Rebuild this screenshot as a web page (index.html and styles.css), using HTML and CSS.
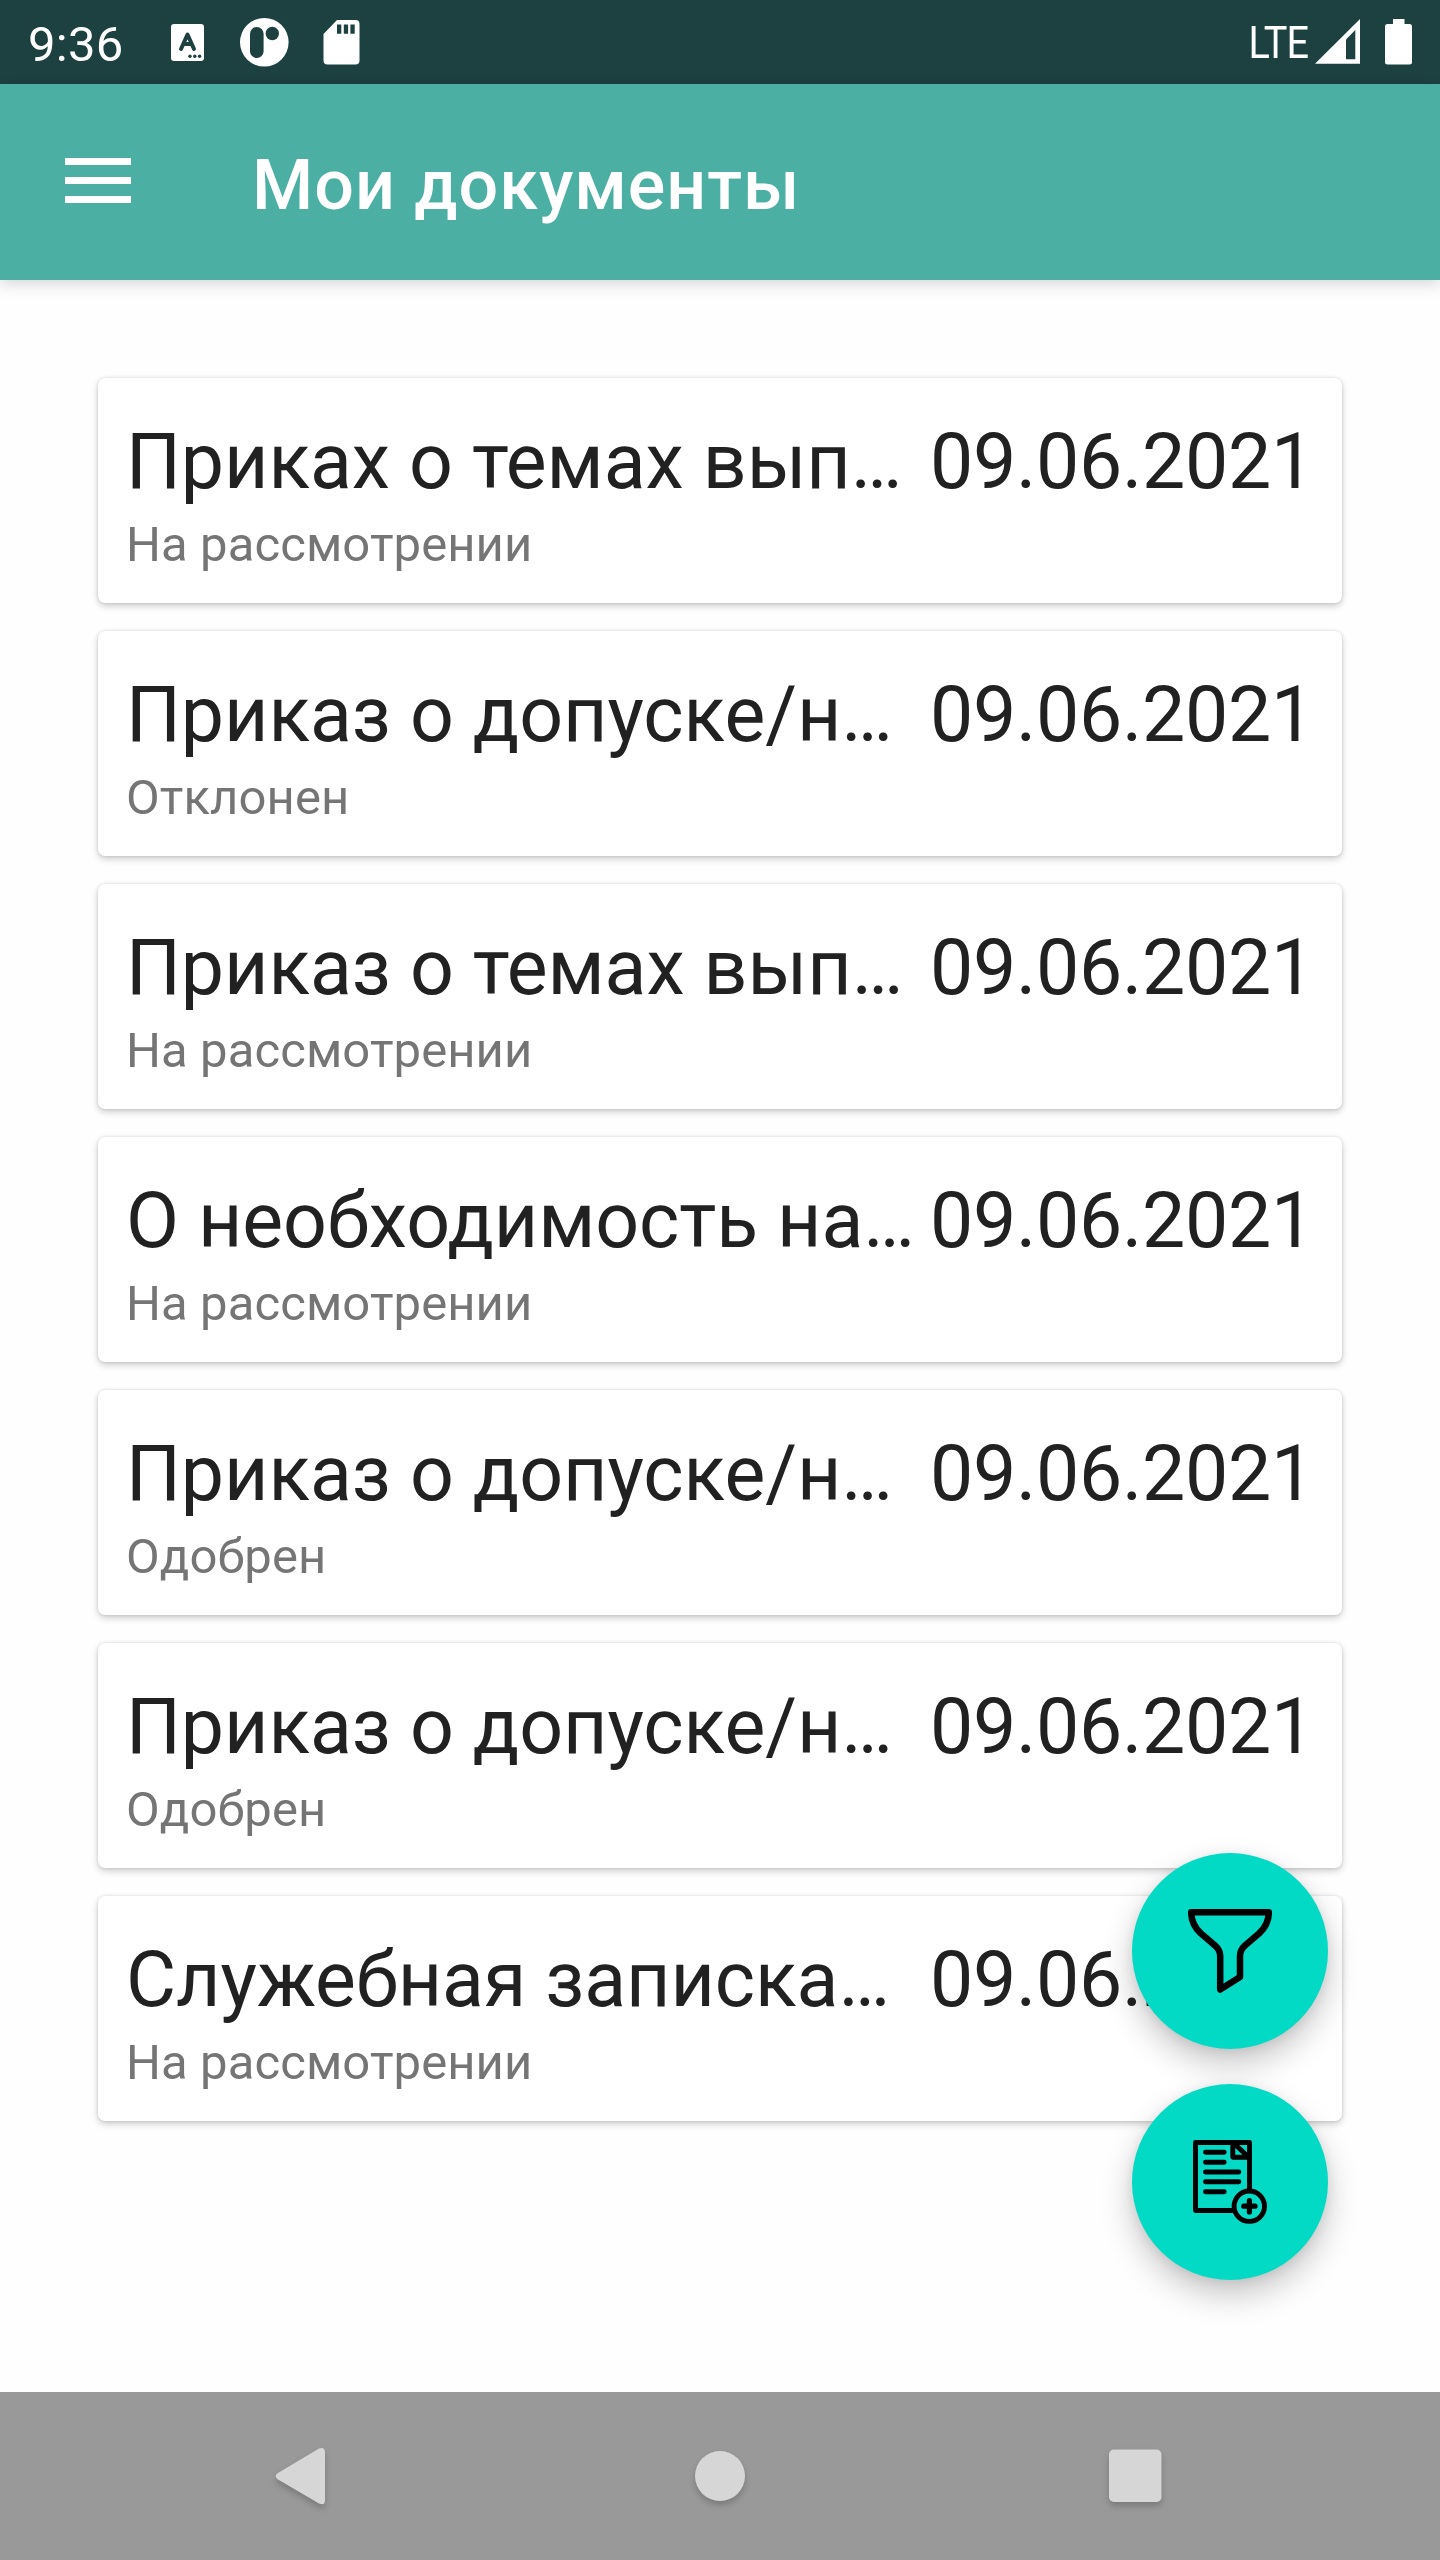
FILE: index.html
```html
<!DOCTYPE html>
<html lang="ru">
<head>
<meta charset="utf-8">
<title>Мои документы</title>
<link rel="stylesheet" href="styles.css">
</head>
<body>
<div class="screen">
  <header class="status-bar">
    <span class="clock">9:36</span>
    <svg class="notifications" width="190" height="50" viewBox="170 17 190 50">
      <rect x="171" y="24" width="33" height="37" rx="3" fill="#fff"/>
      <path d="M181 49l6.500-14.500 6.500 14.500M183.500 44h8" fill="none" stroke="#1d4040" stroke-width="4" stroke-linecap="round" stroke-linejoin="round"/>
      <g fill="#1d4040"><circle cx="190" cy="56.300" r="1.700"/><circle cx="194.800" cy="56.300" r="1.700"/><circle cx="199.600" cy="56.300" r="1.700"/></g>
      <circle cx="264.300" cy="42.300" r="24.300" fill="#fff"/>
      <rect x="250" y="27" width="13.600" height="31" rx="6.800" fill="#1d4040"/>
      <circle cx="272.300" cy="33.500" r="6.700" fill="#1d4040"/>
      <path d="M337 20h18.500q4 0 4 4v36.500q0 4-4 4h-28q-4 0-4-4V34z" fill="#fff"/>
      <path d="M337 24.500h4.300v9.300h-4.300zM343.800 24.500h4.300v9.300h-4.300zM350.400 24.500h4.300v9.300h-4.300z" fill="#1d4040"/>
    </svg>
    <span class="network">LTE</span>
    <svg class="signals" width="100" height="50" viewBox="1314 17 100 50">
      <path d="M1315 63.700 1360 19v44.700z" fill="#fff"/>
      <path d="M1346 39.500 1355.300 30v29.300H1346z" fill="#1d4040"/>
      <path d="M1393 19h11.500v5h5q2.500 0 2.500 2.500v35.500q0 2.500-2.500 2.500h-22q-2.500 0-2.500-2.500V26.500q0-2.500 2.500-2.500h5.500z" fill="#fff"/>
    </svg>
  </header>
  <div class="app-bar">
    <svg class="menu" width="66" height="46" viewBox="0 0 66 46" fill="#fff"><path d="M0 0h66v7H0zM0 19h66v7H0zM0 38h66v7H0z"/></svg>
    <h1 class="page-title">Мои документы</h1>
  </div>
  <main class="documents">
    <article class="card"><div class="row"><span class="name">Приках о темах вып…</span><span class="date">09.06.2021</span></div><div class="state">На рассмотрении</div></article>
    <article class="card"><div class="row"><span class="name">Приказ о допуске/н…</span><span class="date">09.06.2021</span></div><div class="state">Отклонен</div></article>
    <article class="card"><div class="row"><span class="name">Приказ о темах вып…</span><span class="date">09.06.2021</span></div><div class="state">На рассмотрении</div></article>
    <article class="card"><div class="row"><span class="name">О необходимость на…</span><span class="date">09.06.2021</span></div><div class="state">На рассмотрении</div></article>
    <article class="card"><div class="row"><span class="name">Приказ о допуске/н…</span><span class="date">09.06.2021</span></div><div class="state">Одобрен</div></article>
    <article class="card"><div class="row"><span class="name">Приказ о допуске/н…</span><span class="date">09.06.2021</span></div><div class="state">Одобрен</div></article>
    <article class="card"><div class="row"><span class="name">Служебная записка…</span><span class="date">09.06.2021</span></div><div class="state">На рассмотрении</div></article>
  </main>
  <div class="actions">
    <div class="fab">
      <svg width="84" height="84" viewBox="0 0 84 84" fill="none" stroke="#000" stroke-width="6.500" stroke-linejoin="round">
        <path d="M3.200 3.300H80.800C80.800 12 76.500 19.500 71 24.500L57 36.500Q52 41 52 47V68L32.200 80.500V47Q32.200 41 27 36.500L13 24.500C7.500 19.500 3.200 12 3.200 3.300z"/>
      </svg>
    </div>
    <div class="fab">
      <svg width="84" height="84" viewBox="0 0 84 84" fill="none" stroke="#000" stroke-width="4.900" stroke-linecap="round" stroke-linejoin="round">
        <path d="M61.500 50V2.500H7.500V70.500H46"/>
        <path d="M44.800 2.500V17.200H61.500M46 3.500 61 17.500"/>
        <path d="M17.500 12.200H36.200M17.500 22.200H36.200M17.500 32H50.800M17.500 41.800H50.800M17.500 51.700H36.200"/>
        <circle cx="61.300" cy="66.200" r="15.200"/>
        <path stroke-width="5.200" d="M55.800 66.200H67M61.400 60.500V72"/>
      </svg>
    </div>
  </div>
  <nav class="nav-bar">
    <svg width="60" height="70" viewBox="0 0 60 70"><path d="M45 7.500 4 32Q-.5 35 4 38.500L45 62.500Q51 65 51 59V11.500Q51 5.500 45 7.500z"/></svg>
    <svg width="60" height="70" viewBox="0 0 60 70"><circle cx="30" cy="35" r="25"/></svg>
    <svg width="60" height="70" viewBox="0 0 60 70"><rect x="4" y="8.500" width="52.500" height="52.500" rx="5"/></svg>
  </nav>
</div>
</body>
</html>
```
FILE: styles.css
```css
* { box-sizing: border-box; }

body {
  margin: 0;
  font-family: Roboto, sans-serif;
}

.screen {
  position: relative;
  display: flex;
  flex-direction: column;
  width: 1440px;
  height: 2560px;
  overflow: hidden;
  background: #fefefe;
}

.status-bar {
  display: flex;
  align-items: center;
  height: 84px;
  padding: 0 26px 0 28px;
  background: #1d4040;
  color: #fff;
}

.clock {
  width: 142px;
  font-size: 49px;
  letter-spacing: .3px;
  line-height: 56px;
  padding-top: 5px;
}

.network {
  margin-left: auto;
  margin-right: 6px;
  padding-top: 1px;
  font-size: 44px;
  letter-spacing: -1px;
  line-height: 50px;
  transform: scaleX(.9);
  transform-origin: right;
}

.app-bar {
  z-index: 1;
  display: flex;
  align-items: center;
  height: 196px;
  padding-left: 65px;
  background: #4cafa3;
  box-shadow: 0 4px 14px rgba(0, 0, 0, .16);
}

.menu {
  flex: none;
  margin-bottom: 2px;
}

.page-title {
  margin: 5px 0 0 121px;
  color: #fff;
  font-size: 70px;
  font-weight: 500;
  letter-spacing: 1px;
  line-height: 82px;
  white-space: nowrap;
}

.documents {
  flex: 1;
  display: flex;
  flex-direction: column;
  gap: 28px;
  padding: 98px 98px 0;
}

.card {
  height: 225px;
  padding: 39px 28px 0;
  border-radius: 7px;
  background: #fff;
  box-shadow: 0 3px 7px rgba(0, 0, 0, .2), 0 0 3px rgba(0, 0, 0, .12);
}

.row {
  display: flex;
  color: #212121;
  font-size: 77px;
  line-height: 90px;
  white-space: nowrap;
}

.name {
  width: 804px;
  letter-spacing: -.06px;
}

.date { letter-spacing: -.27px; }

.state {
  margin-top: 9px;
  color: #757575;
  font-size: 49px;
  letter-spacing: .1px;
  line-height: 57px;
}

.actions {
  position: absolute;
  top: 1853px;
  right: 112px;
  display: flex;
  flex-direction: column;
  gap: 35px;
}

.fab {
  display: flex;
  align-items: center;
  justify-content: center;
  width: 196px;
  height: 196px;
  border-radius: 50%;
  background: #03dac5;
  box-shadow: 0 15px 32px rgba(0, 0, 0, .22), 0 2px 12px rgba(0, 0, 0, .08);
}

.nav-bar {
  display: flex;
  justify-content: space-between;
  align-items: center;
  height: 168px;
  padding: 0 275px 0 274px;
  background: #999;
}

.nav-bar svg {
  fill: #d6d6d6;
  filter: drop-shadow(0 4px 3px rgba(0, 0, 0, .2));
}
```
